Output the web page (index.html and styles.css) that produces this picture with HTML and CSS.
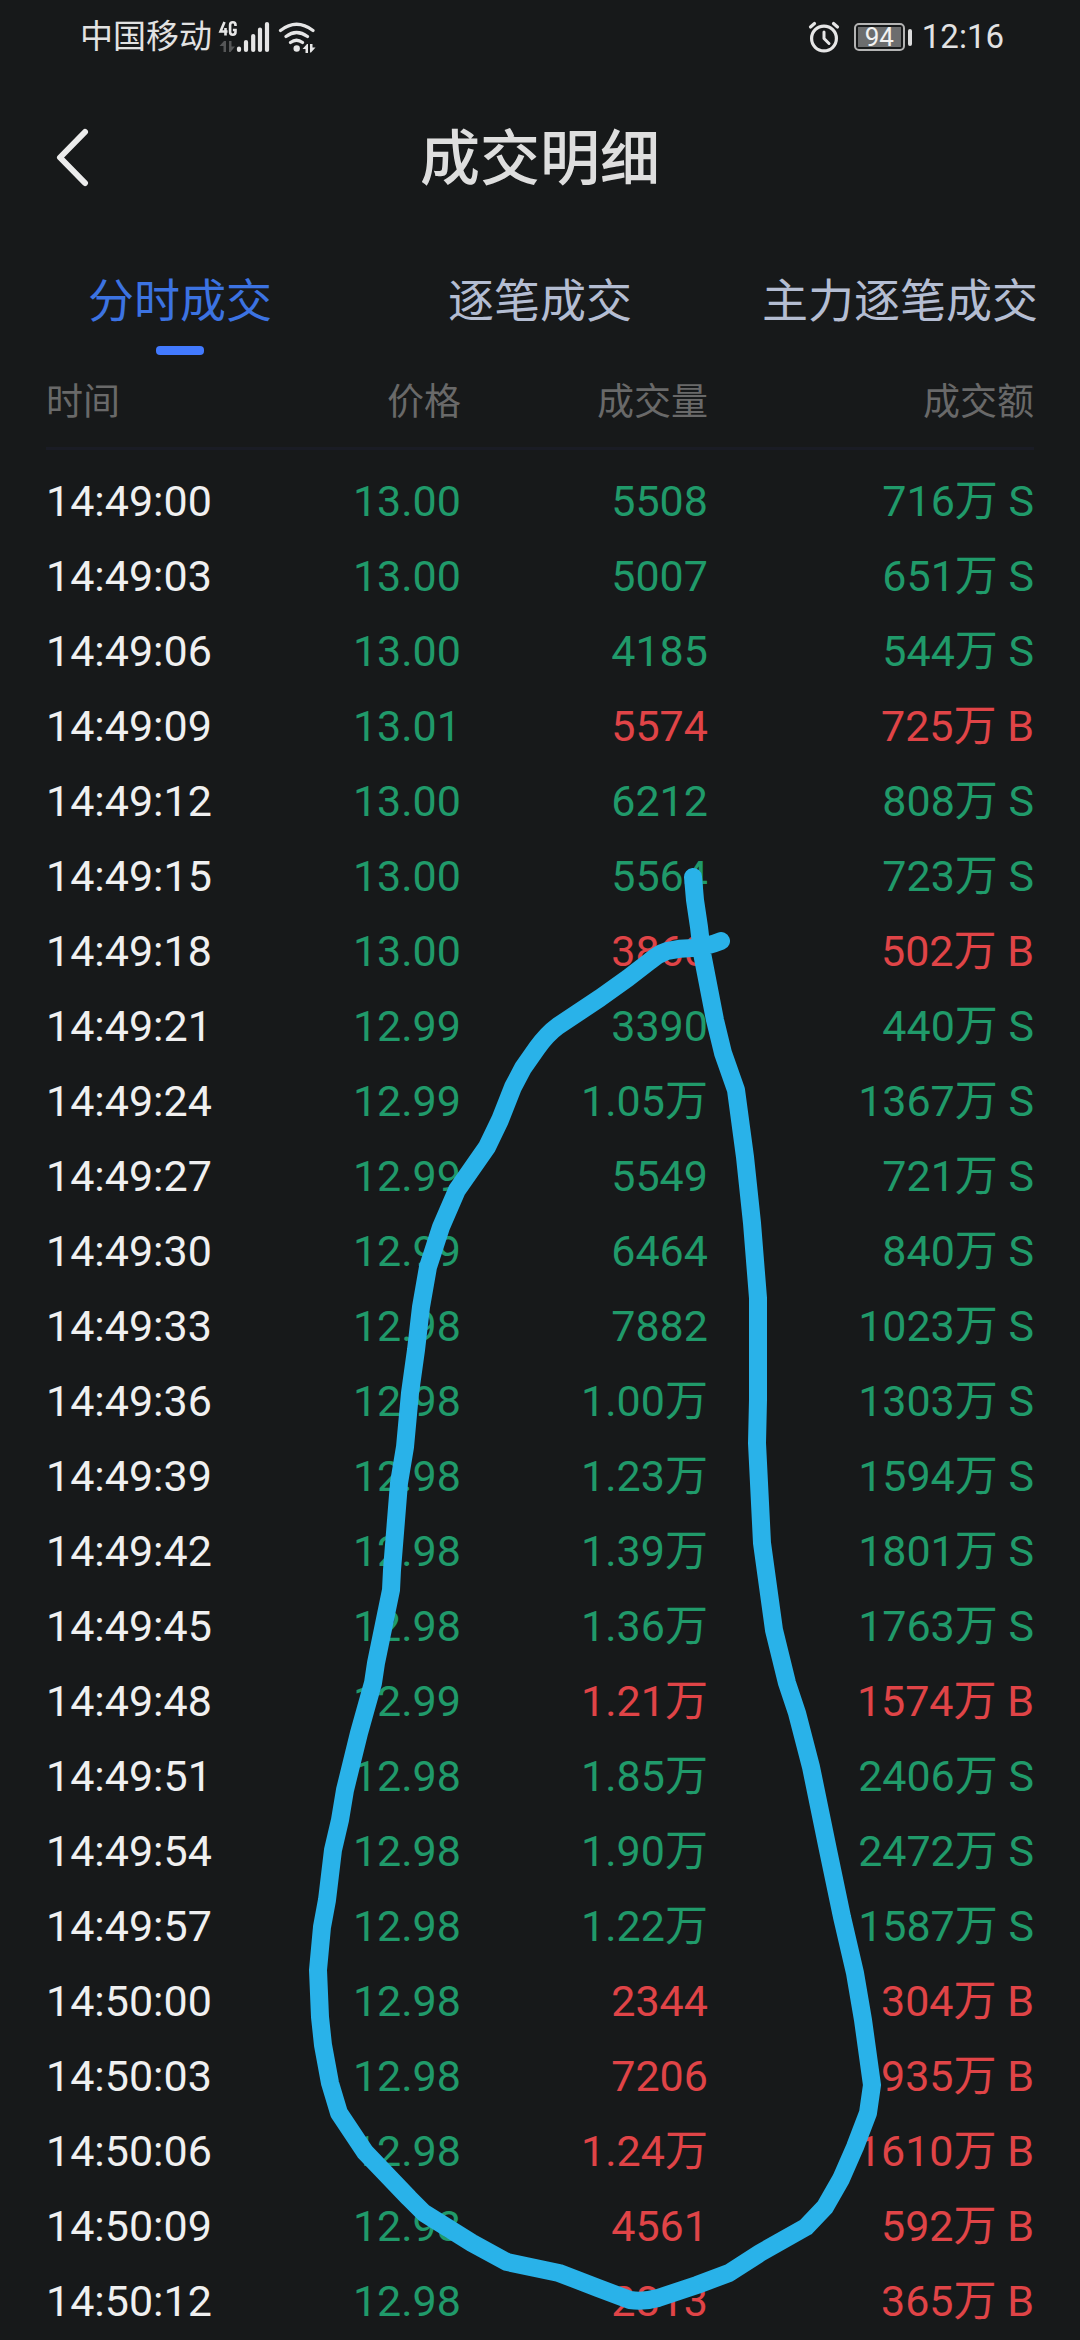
FILE: index.html
```html
<!DOCTYPE html>
<html lang="zh-CN">
<head>
<meta charset="utf-8">
<meta name="viewport" content="width=device-width, initial-scale=1">
<title>成交明细</title>
<link rel="stylesheet" href="styles.css">
</head>
<body>
<div class="page">
  <div class="status">
    <span class="carrier">中国移动</span>
    <svg class="signal" width="50" height="34" viewBox="219 19 50 34" aria-hidden="true">
      <path d="M224.500 21l-4 9.500h7M225.500 27v7.500M235.500 25v-1a2.700 2.700 0 0 0-5.400 0v7a2.700 2.700 0 0 0 5.400 0v-2h-2.600" fill="none" stroke="#e6e6e6" stroke-width="2.600"/>
      <path d="M219.500 45l4.500-5h2v11h-2.500v-6zM229 40h2.500v5.500h3.500l-4.500 5.500h-1.500z" fill="#555657"/>
      <path d="M239 47.500v1.500M246 41v8M253.200 35v14M260 28.500v20.500M267 23v26" stroke="#e6e6e6" stroke-width="4.200" stroke-linecap="round"/>
    </svg>
    <svg class="wifi" width="38" height="34" viewBox="278 19 38 34" aria-hidden="true">
      <path d="M280.500 29.500q16-12.500 32.500 0M286 35.500q10.500-8 21.500 0M290.500 41.500q6-4.500 12 0" fill="none" stroke="#e6e6e6" stroke-width="3.200" stroke-linecap="round"/>
      <circle cx="296.700" cy="47.500" r="3.200" fill="#e6e6e6"/>
      <path d="M302.500 48l4.500-5h1v9h-2.500v-4zM310 43h2.500v3.500h3l-4.500 5h-1z" fill="#e6e6e6"/>
    </svg>
    <svg class="alarm" width="32" height="32" viewBox="0 0 32 32" aria-hidden="true">
      <g fill="none" stroke="#e6e6e6" stroke-linecap="round" stroke-linejoin="round">
        <circle cx="16" cy="17.500" r="12.400" stroke-width="3.200"/>
        <path d="M16 11v6.500l5 5" stroke-width="3"/>
        <path d="M2.500 6l4-3.500M29.500 6l-4-3.500" stroke-width="3.200"/>
      </g>
    </svg>
    <span class="battery"><span class="level">94</span></span>
    <time class="clock">12:16</time>
  </div>

  <header class="title-bar">
    <button class="back" type="button" aria-label="返回">
      <svg width="36" height="60" viewBox="0 0 36 60" aria-hidden="true"><path d="M31 4L6 29.500L31 55" fill="none" stroke="#ececec" stroke-width="6" stroke-linecap="round" stroke-linejoin="round"/></svg>
    </button>
    <h1 class="title">成交明细</h1>
  </header>

  <nav class="tabs">
    <a class="tab active" href="#time">分时成交</a>
    <a class="tab" href="#tick">逐笔成交</a>
    <a class="tab" href="#main">主力逐笔成交</a>
  </nav>

  <table class="trades">
    <colgroup><col class="c-time"><col class="c-price"><col class="c-volume"><col class="c-amount"></colgroup>
    <thead>
      <tr><th>时间</th><th>价格</th><th>成交量</th><th>成交额</th></tr>
    </thead>
    <tbody>
      <tr class="sell"><td>14:49:00</td><td>13.00</td><td>5508</td><td>716万 S</td></tr>
      <tr class="sell"><td>14:49:03</td><td>13.00</td><td>5007</td><td>651万 S</td></tr>
      <tr class="sell"><td>14:49:06</td><td>13.00</td><td>4185</td><td>544万 S</td></tr>
      <tr class="buy"><td>14:49:09</td><td>13.01</td><td>5574</td><td>725万 B</td></tr>
      <tr class="sell"><td>14:49:12</td><td>13.00</td><td>6212</td><td>808万 S</td></tr>
      <tr class="sell"><td>14:49:15</td><td>13.00</td><td>5564</td><td>723万 S</td></tr>
      <tr class="buy"><td>14:49:18</td><td>13.00</td><td>3860</td><td>502万 B</td></tr>
      <tr class="sell"><td>14:49:21</td><td>12.99</td><td>3390</td><td>440万 S</td></tr>
      <tr class="sell"><td>14:49:24</td><td>12.99</td><td>1.05万</td><td>1367万 S</td></tr>
      <tr class="sell"><td>14:49:27</td><td>12.99</td><td>5549</td><td>721万 S</td></tr>
      <tr class="sell"><td>14:49:30</td><td>12.99</td><td>6464</td><td>840万 S</td></tr>
      <tr class="sell"><td>14:49:33</td><td>12.98</td><td>7882</td><td>1023万 S</td></tr>
      <tr class="sell"><td>14:49:36</td><td>12.98</td><td>1.00万</td><td>1303万 S</td></tr>
      <tr class="sell"><td>14:49:39</td><td>12.98</td><td>1.23万</td><td>1594万 S</td></tr>
      <tr class="sell"><td>14:49:42</td><td>12.98</td><td>1.39万</td><td>1801万 S</td></tr>
      <tr class="sell"><td>14:49:45</td><td>12.98</td><td>1.36万</td><td>1763万 S</td></tr>
      <tr class="buy"><td>14:49:48</td><td>12.99</td><td>1.21万</td><td>1574万 B</td></tr>
      <tr class="sell"><td>14:49:51</td><td>12.98</td><td>1.85万</td><td>2406万 S</td></tr>
      <tr class="sell"><td>14:49:54</td><td>12.98</td><td>1.90万</td><td>2472万 S</td></tr>
      <tr class="sell"><td>14:49:57</td><td>12.98</td><td>1.22万</td><td>1587万 S</td></tr>
      <tr class="buy"><td>14:50:00</td><td>12.98</td><td>2344</td><td>304万 B</td></tr>
      <tr class="buy"><td>14:50:03</td><td>12.98</td><td>7206</td><td>935万 B</td></tr>
      <tr class="buy"><td>14:50:06</td><td>12.98</td><td>1.24万</td><td>1610万 B</td></tr>
      <tr class="buy"><td>14:50:09</td><td>12.98</td><td>4561</td><td>592万 B</td></tr>
      <tr class="buy"><td>14:50:12</td><td>12.98</td><td>2813</td><td>365万 B</td></tr>
    </tbody>
  </table>

  <svg class="marker" viewBox="0 0 1080 2340" aria-hidden="true">
    <path d="M693 877L695 900L699 927L702 953L715 1020L723 1053L736 1090L745 1157L752 1223L758 1298L758 1400L757 1443L762 1543L774 1630L787 1683L797 1713L811 1767L828 1850L842 1917L855 1973L863 2020L872 2085L868 2113L855 2147L841 2179L825 2207L806 2227L760 2253L729 2273L697 2285L658 2298Q644 2302 630 2300L598 2288L559 2273L507 2262L472 2243L424 2213L409 2198L365 2152L339 2113L330 2083L323 2045L320 2017L318 1970L322 1927L327 1900L333 1850L340 1820L345 1790L359 1733L373 1683L376 1663L391 1590L392 1570L399 1483L405 1447L410 1393L416 1350L421 1307L428 1267L441 1227L457 1190L487 1147L500 1120L513 1087L523 1068L537 1048Q547 1034 558 1026L600 998L628 978L650 961Q658 954 667 951Q680 948 693 948Q706 947 721 941"/>
  </svg>
</div>
</body>
</html>
```
FILE: styles.css
```css
* {
  box-sizing: border-box;
}

body {
  margin: 0;
  background: #17191a;
  color: #ececec;
  font-family: Roboto, "Noto Sans CJK SC", sans-serif;
}

.page {
  position: relative;
  min-height: 100vh;
}

/* Phone status bar */
.status {
  display: flex;
  align-items: center;
  height: 74px;
  padding: 0 76px 0 80px;
  color: #e2e2e2;
}

.carrier {
  font-size: 33px;
  line-height: 40px;
}

.signal {
  margin-left: 7px;
  overflow: visible;
}

.wifi {
  margin-left: 9px;
}

.alarm {
  margin-left: auto;
}

.battery {
  position: relative;
  display: flex;
  width: 51px;
  height: 28px;
  margin: 0 17px 0 14px;
  padding: 2px;
  border: 2px solid #b4b4b4;
  border-radius: 5px;
}

.battery::after {
  content: "";
  position: absolute;
  left: 52px;
  top: 4px;
  width: 4px;
  height: 17px;
  border-radius: 2px;
  background: #dcdcdc;
}

.level {
  width: 43px;
  background: #6c6d6e;
  color: #f2f2f2;
  font-size: 26px;
  line-height: 20px;
  text-align: center;
}

.clock {
  font-size: 33px;
  line-height: 40px;
}

/* Title */
.title-bar {
  display: grid;
  grid-template-columns: 1fr auto 1fr;
  align-items: center;
  height: 168px;
  padding: 0 54px;
}

.back {
  display: flex;
  width: 36px;
  padding: 0;
  border: 0;
  background: none;
}

.title {
  margin: 0;
  padding-top: 4px;
  color: #dedede;
  font-size: 60px;
  font-weight: 500;
  line-height: 80px;
}

/* Tabs */
.tabs {
  display: grid;
  grid-template-columns: repeat(3, 1fr);
  height: 116px;
}

.tab {
  display: flex;
  flex-direction: column;
  align-items: center;
  gap: 10px;
  padding-top: 24px;
  color: #b4bdd2;
  font-size: 46px;
  line-height: 70px;
  text-decoration: none;
  white-space: nowrap;
}

.tab.active {
  color: #3c73e2;
}

.tab.active::after {
  content: "";
  width: 48px;
  height: 9px;
  border-radius: 4px;
  background: #427aff;
}

/* Trade list */
.trades {
  width: calc(100% - 92px);
  margin: 0 46px;
  border-collapse: separate;
  border-spacing: 0;
  table-layout: fixed;
}

.c-time {
  width: 21%;
}

.c-price {
  width: 21%;
}

.c-volume {
  width: 25%;
}

.c-amount {
  width: 33%;
}

.trades th,
.trades td {
  padding: 0;
  font-weight: 400;
  text-align: right;
  white-space: nowrap;
}

.trades th:first-child,
.trades td:first-child {
  text-align: left;
}

.trades th {
  height: 92px;
  border-bottom: 3px solid #1a1c25;
  color: #696969;
  font-size: 37px;
  line-height: 89px;
}

.trades tbody::before {
  content: "";
  display: block;
  height: 14px;
}

.trades td {
  height: 75px;
  color: #209a6a;
  font-size: 43px;
  line-height: 75px;
}

.trades td:first-child {
  color: #f0f0f0;
}

.trades .buy td:nth-child(n + 3) {
  color: #e04447;
}

/* Hand-drawn marker line over the list */
.marker {
  position: absolute;
  top: 0;
  left: 0;
  width: 100%;
  pointer-events: none;
}

.marker path {
  fill: none;
  stroke: #29b2e9;
  stroke-width: 18;
  stroke-linecap: round;
  stroke-linejoin: round;
}
```
